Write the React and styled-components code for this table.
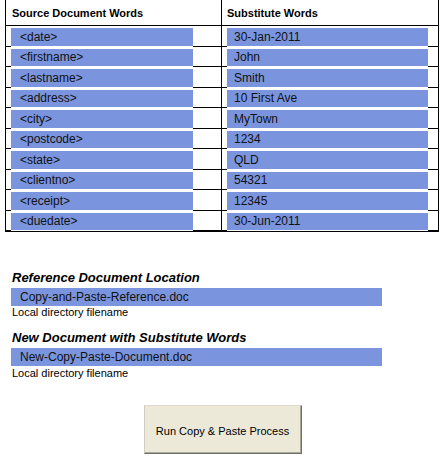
import styled, { createGlobalStyle } from 'styled-components';

const GlobalStyle = createGlobalStyle`
  body {
    margin: 0;
    background: #fff;
    font-family: "Liberation Sans", Arial, sans-serif;
    color: #000;
  }
`;

const Page = styled.div`
  width: 445px;
  height: 463px;
  overflow: hidden;
`;

const Table = styled.div`
  margin-left: 5px;
  width: 432px;
  border-left: 1px solid #000;
  border-right: 1px solid #000;
  border-bottom: 1px solid #000;
`;

const HeaderRow = styled.div`
  display: grid;
  grid-template-columns: 216px 216px;
  height: 26px;
  box-sizing: border-box;
  border-bottom: 1px solid #000;
  font-size: 11px;
  font-weight: bold;
`;

const HeaderCell = styled.div`
  display: flex;
  align-items: center;
  padding-left: ${(p) => p.$pad}px;
  border-right: ${(p) => (p.$divider ? '1px solid #000' : 'none')};
`;

const Row = styled.div`
  display: grid;
  grid-template-columns: 216px 216px;
  height: 20.5px;
  box-sizing: border-box;
  border-bottom: 1px solid #000;
`;

const Cell = styled.div`
  display: flex;
  padding-left: 5px;
  border-right: ${(p) => (p.$divider ? '1px solid #000' : 'none')};
`;

const Blue = styled.div`
  width: ${(p) => p.$w}px;
  margin-bottom: -1px;
  box-sizing: border-box;
  background: #7a95de;
  border-top: 2px solid #fff;
  border-bottom: 1px solid #fff;
  display: flex;
  align-items: center;
  padding-left: ${(p) => p.$pad}px;
  font-size: 12px;
  color: #111;
  white-space: nowrap;
`;

const Files = styled.div`
  padding-left: 11px;
`;

const Title = styled.div`
  margin-top: ${(p) => p.$top}px;
  padding-left: 1px;
  font-size: 13px;
  line-height: 15px;
  font-weight: bold;
  font-style: italic;
`;

const FileBar = styled.div`
  margin-top: 3px;
  width: 371px;
  height: 18px;
  background: #7a95de;
  display: flex;
  align-items: center;
  padding-left: 9px;
  box-sizing: border-box;
  font-size: 12px;
  color: #111;
`;

const Hint = styled.div`
  padding-left: 1px;
  font-size: 11px;
  line-height: 12px;
  margin-top: ${(p) => p.$top || 0}px;
`;

const RunButton = styled.button`
  display: block;
  margin: 26px auto 0;
  width: 158px;
  height: 49px;
  padding: 3px 0 0;
  background: #ece9d8;
  border: 1px solid;
  border-color: #dcd9cf #6e6e6e #6e6e6e #d0cdc3;
  box-shadow: inset -1px -1px 0 #aca899;
  font-family: "Liberation Sans", Arial, sans-serif;
  font-size: 11px;
  color: #000;
`;

const words = [
  ['<date>', '30-Jan-2011'],
  ['<firstname>', 'John'],
  ['<lastname>', 'Smith'],
  ['<address>', '10 First Ave'],
  ['<city>', 'MyTown'],
  ['<postcode>', '1234'],
  ['<state>', 'QLD'],
  ['<clientno>', '54321'],
  ['<receipt>', '12345'],
  ['<duedate>', '30-Jun-2011'],
];

export default function App() {
  return (
    <Page>
      <GlobalStyle />
      <Table>
        <HeaderRow>
          <HeaderCell $divider $pad={6}>Source Document Words</HeaderCell>
          <HeaderCell $pad={5}>Substitute Words</HeaderCell>
        </HeaderRow>
        {words.map(([src, sub]) => (
          <Row key={src}>
            <Cell $divider>
              <Blue $w={182} $pad={9}>{src}</Blue>
            </Cell>
            <Cell>
              <Blue $w={201} $pad={7}>{sub}</Blue>
            </Cell>
          </Row>
        ))}
      </Table>
      <Files>
        <Title $top={38}>Reference Document Location</Title>
        <FileBar>Copy-and-Paste-Reference.doc</FileBar>
        <Hint>Local directory filename</Hint>
        <Title $top={12}>New Document with Substitute Words</Title>
        <FileBar>New-Copy-Paste-Document.doc</FileBar>
        <Hint $top={1}>Local directory filename</Hint>
      </Files>
      <RunButton>Run Copy &amp; Paste Process</RunButton>
    </Page>
  );
}
